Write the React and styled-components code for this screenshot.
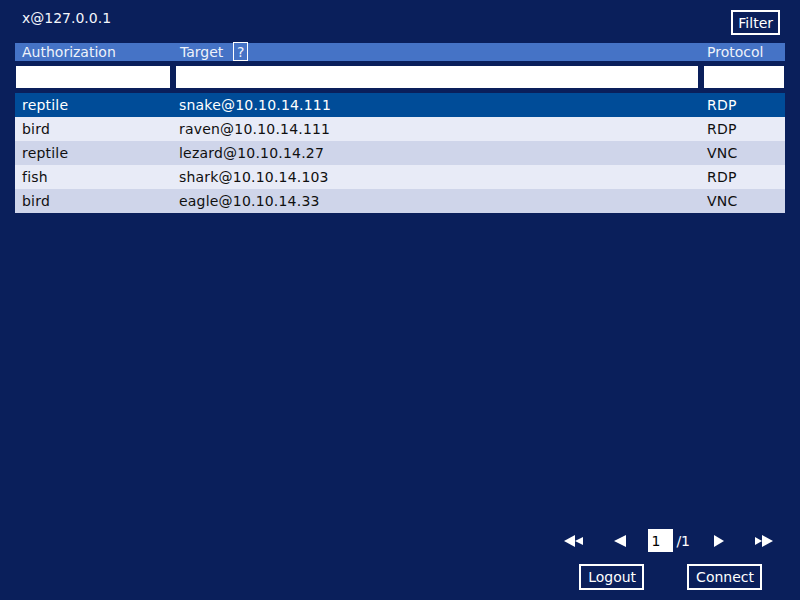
import React from "react";
import styled, { createGlobalStyle } from "styled-components";

const Global = createGlobalStyle`
  html, body { margin: 0; padding: 0; background: #0a1f5b; }
  body { font-family: "DejaVu Sans", "Liberation Sans", sans-serif; font-size: 14px; color: #fff; }
  * { box-sizing: border-box; }
`;

const Page = styled.div`
  height: 100vh;
  display: flex;
  flex-direction: column;
  padding: 0 15px 10px;
`;

const TopBar = styled.div`
  height: 43px;
  display: flex;
  justify-content: space-between;
  align-items: flex-start;
  padding: 10px 5px 0 7px;
`;

const UserLabel = styled.div`
  font-size: 14px;
  line-height: 17px;
  color: #f4f6fb;
`;

const OutlineButton = styled.button`
  font-family: inherit;
  font-size: 14px;
  color: #fff;
  background: transparent;
  border: 2px solid #fff;
  height: ${(p) => (p.$small ? "25px" : "26px")};
  padding: ${(p) => (p.$small ? "0 5px" : "0 6px 0 7px")};
  margin-left: ${(p) => p.$space || 0}px;
  line-height: 1;
  cursor: pointer;
`;

const Grid = styled.div`
  display: grid;
  grid-template-columns: 158px 1fr 84px;
`;

const HeaderRow = styled(Grid)`
  height: 18px;
  background: #4573c6;
  color: #eef2fa;
  line-height: 18px;
`;

const HeaderCell = styled.div`
  padding-left: ${(p) => (p.$last ? 6 : 7)}px;
  display: flex;
  align-items: center;
  white-space: nowrap;
`;

const HelpBox = styled.span`
  display: inline-flex;
  align-items: center;
  justify-content: center;
  width: 15px;
  height: 19px;
  margin: -1px 0 0 10px;
  border: 1px solid #fff;
  font-size: 14px;
  line-height: 1;
`;

const FilterRow = styled(Grid)`
  margin-top: 5px;
  height: 22px;
`;

const FilterInput = styled.input`
  height: 22px;
  border: none;
  outline: none;
  background: #fff;
  margin: 0 ${(p) => (p.$last ? 1 : 3)}px 0 ${(p) => (p.$first ? 1 : 3)}px;
  min-width: 0;
  font-family: inherit;
  font-size: 14px;
`;

const Body = styled.div`
  margin-top: 5px;
`;

const Row = styled(Grid)`
  height: 24px;
  line-height: 24px;
  background: ${(p) => (p.$selected ? "#004c98" : p.$alt ? "#cfd5ea" : "#e8ebf7")};
  color: ${(p) => (p.$selected ? "#ffffff" : "#101010")};
`;

const Cell = styled.div`
  padding-left: ${(p) => (p.$first ? 7 : 6)}px;
  white-space: nowrap;
  letter-spacing: 0.2px;
`;

const Spacer = styled.div`
  flex: 1;
`;

const Pager = styled.div`
  display: flex;
  align-items: center;
  justify-content: flex-end;
  height: 23px;
  padding-right: 12px;
`;

const PagerIcon = styled.button`
  background: none;
  border: none;
  padding: 0;
  margin-left: ${(p) => p.$space || 0}px;
  display: flex;
  cursor: pointer;
`;

const PageInput = styled.input`
  width: 25px;
  height: 23px;
  border: none;
  outline: none;
  background: #fff;
  color: #000;
  font-family: inherit;
  font-size: 14px;
  padding: 0 0 0 3px;
  margin-left: 22px;
`;

const PageTotal = styled.span`
  margin-left: 3px;
  color: #fff;
`;

const Actions = styled.div`
  display: flex;
  justify-content: flex-end;
  margin-top: 12px;
  padding-right: 23px;
`;

const rows = [
  ["reptile", "snake@10.10.14.111", "RDP"],
  ["bird", "raven@10.10.14.111", "RDP"],
  ["reptile", "lezard@10.10.14.27", "VNC"],
  ["fish", "shark@10.10.14.103", "RDP"],
  ["bird", "eagle@10.10.14.33", "VNC"],
];

export default function App() {
  return (
    <>
      <Global />
      <Page>
        <TopBar>
          <UserLabel>x@127.0.0.1</UserLabel>
          <OutlineButton $small>Filter</OutlineButton>
        </TopBar>
        <HeaderRow>
          <HeaderCell>Authorization</HeaderCell>
          <HeaderCell>
            Target<HelpBox>?</HelpBox>
          </HeaderCell>
          <HeaderCell $last>Protocol</HeaderCell>
        </HeaderRow>
        <FilterRow>
          <FilterInput $first />
          <FilterInput />
          <FilterInput $last />
        </FilterRow>
        <Body>
          {rows.map((r, i) => (
            <Row key={i} $selected={i === 0} $alt={i % 2 === 0}>
              <Cell $first>{r[0]}</Cell>
              <Cell>{r[1]}</Cell>
              <Cell>{r[2]}</Cell>
            </Row>
          ))}
        </Body>
        <Spacer />
        <Pager>
          <PagerIcon aria-label="first">
            <svg width="19" height="12" viewBox="0 0 19 12">
              <polygon points="0,6 11,0 11,12" fill="#fff" />
              <polygon points="11,6 19,2 19,10" fill="#fff" />
            </svg>
          </PagerIcon>
          <PagerIcon $space={31} aria-label="previous">
            <svg width="12" height="12" viewBox="0 0 12 12">
              <polygon points="0,6 12,0 12,12" fill="#fff" />
            </svg>
          </PagerIcon>
          <PageInput defaultValue="1" />
          <PageTotal>/1</PageTotal>
          <PagerIcon $space={24} aria-label="next">
            <svg width="10" height="12" viewBox="0 0 10 12">
              <polygon points="0,0 10,6 0,12" fill="#fff" />
            </svg>
          </PagerIcon>
          <PagerIcon $space={31} aria-label="last">
            <svg width="18" height="12" viewBox="0 0 18 12">
              <polygon points="0,2 7,6 0,10" fill="#fff" />
              <polygon points="7,0 18,6 7,12" fill="#fff" />
            </svg>
          </PagerIcon>
        </Pager>
        <Actions>
          <OutlineButton>Logout</OutlineButton>
          <OutlineButton $space={43}>Connect</OutlineButton>
        </Actions>
      </Page>
    </>
  );
}
